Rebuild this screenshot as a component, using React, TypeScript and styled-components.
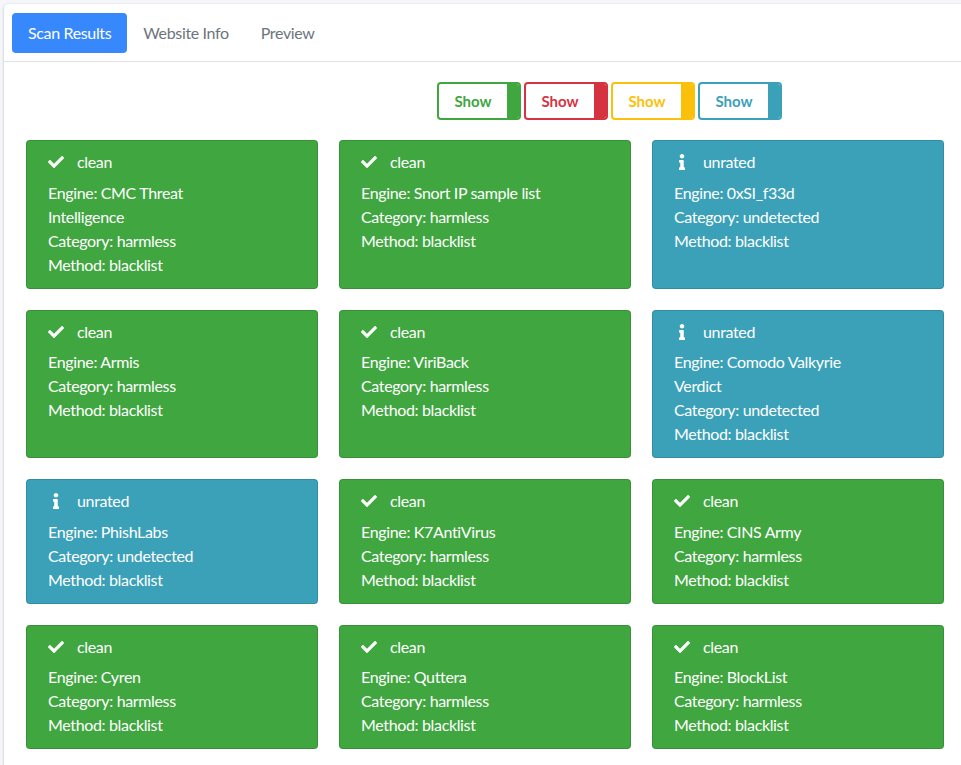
import { FC } from 'react';
import styled, { createGlobalStyle } from 'styled-components';
import { FaCheck, FaInfo } from 'react-icons/fa';

const GlobalStyle = createGlobalStyle`
	html, body {
		margin: 0;
		overflow: hidden;
		background: #f4f6f9;
		font-family: Lato, "Open Sans", sans-serif;
		letter-spacing: -0.35px;
	}
`;

const colors = {
	green: '#40a640',
	red: '#d63341',
	yellow: '#fbc10a',
	teal: '#3ba1b9',
};

const Panel = styled.div`
	margin: 4px -12px 0 4px;
	background: #fff;
	border-radius: 4px;
	box-shadow: 0 0 1px rgba(0, 0, 0, 0.13), 0 1px 3px rgba(0, 0, 0, 0.2);
	min-height: 800px;
`;

const Header = styled.div`
	display: flex;
	padding: 9px 8px 8px;
	border-bottom: 1px solid #dfe3e7;
`;

const Tab = styled.div<{ $active?: boolean }>`
	padding: 8px 16px;
	line-height: 24px;
	font-size: 16px;
	border-radius: 4px;
	color: ${(p) => (p.$active ? '#fff' : '#6c757d')};
	background: ${(p) => (p.$active ? '#3788fd' : 'transparent')};
`;

const Body = styled.div`
	padding: 20px 22px;
`;

const Filters = styled.div`
	display: flex;
	gap: 3px;
	margin: 0 0 20px 411px;
`;

const FilterButton = styled.div<{ $color: string }>`
	width: 84px;
	height: 38px;
	box-sizing: border-box;
	display: flex;
	border: 2px solid ${(p) => p.$color};
	border-radius: 4px;
	overflow: hidden;
	color: ${(p) => p.$color};
	background: #fff;
`;

const FilterLabel = styled.span`
	flex: 1;
	display: flex;
	align-items: center;
	justify-content: center;
	font-weight: 700;
	font-size: 15px;
	letter-spacing: 0;
`;

const FilterStrip = styled.span<{ $color: string }>`
	width: 12px;
	background: ${(p) => p.$color};
`;

const Grid = styled.div`
	display: grid;
	grid-template-columns: repeat(3, 292px);
	gap: 21px;
`;

const Result = styled.div<{ $color: string }>`
	background: ${(p) => p.$color};
	border: 1px solid rgba(0, 0, 0, 0.12);
	border-radius: 4px;
	padding: 9px 21px 11px;
	color: #fff;
	font-size: 16px;
	line-height: 24px;
`;

const Title = styled.div`
	display: flex;
	align-items: center;
	height: 24px;
	margin-bottom: 6.5px;

	svg {
		margin-right: 13px;
	}
`;

const Line = styled.p`
	margin: 0;
	line-height: 24px;
	max-width: 200px;
`;

type Item = { clean: boolean; engine: string };

const items: Item[] = [
	{ clean: true, engine: 'CMC Threat Intelligence' },
	{ clean: true, engine: 'Snort IP sample list' },
	{ clean: false, engine: '0xSI_f33d' },
	{ clean: true, engine: 'Armis' },
	{ clean: true, engine: 'ViriBack' },
	{ clean: false, engine: 'Comodo Valkyrie Verdict' },
	{ clean: false, engine: 'PhishLabs' },
	{ clean: true, engine: 'K7AntiVirus' },
	{ clean: true, engine: 'CINS Army' },
	{ clean: true, engine: 'Cyren' },
	{ clean: true, engine: 'Quttera' },
	{ clean: true, engine: 'BlockList' },
];

const App: FC = () => {
	return (
		<>
			<GlobalStyle />
			<Panel>
				<Header>
					<Tab $active>Scan Results</Tab>
					<Tab>Website Info</Tab>
					<Tab>Preview</Tab>
				</Header>
				<Body>
					<Filters>
						{[colors.green, colors.red, colors.yellow, colors.teal].map((c) => (
							<FilterButton key={c} $color={c}>
								<FilterLabel>Show</FilterLabel>
								<FilterStrip $color={c} />
							</FilterButton>
						))}
					</Filters>
					<Grid>
						{items.map((it) => (
							<Result key={it.engine} $color={it.clean ? colors.green : colors.teal}>
								<Title>
									{it.clean ? <FaCheck size={16} /> : <FaInfo size={16} />}
									{it.clean ? 'clean' : 'unrated'}
								</Title>
								<Line>Engine: {it.engine}</Line>
								<Line>Category: {it.clean ? 'harmless' : 'undetected'}</Line>
								<Line>Method: blacklist</Line>
							</Result>
						))}
					</Grid>
				</Body>
			</Panel>
		</>
	);
};

export default App;
